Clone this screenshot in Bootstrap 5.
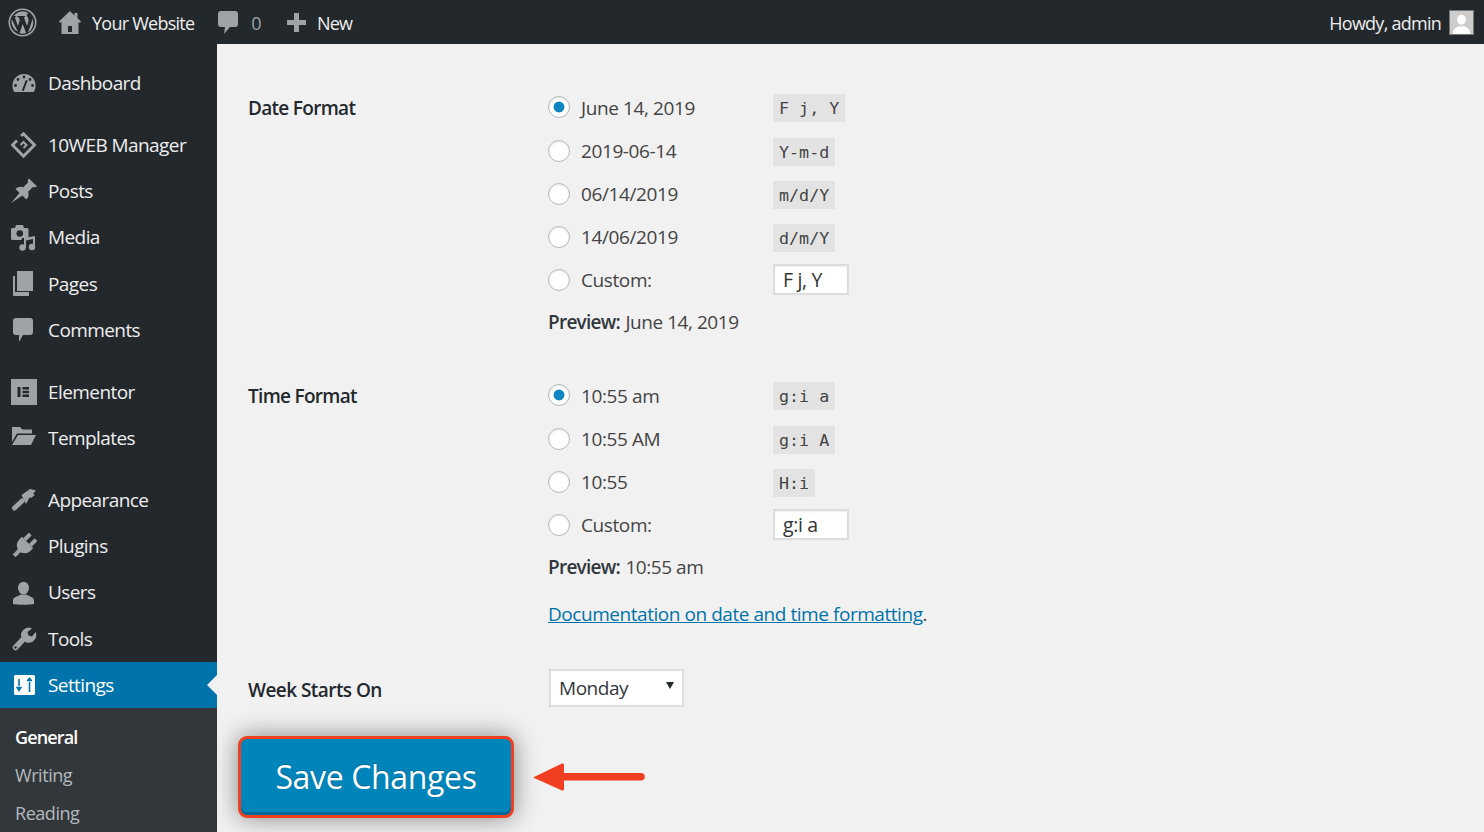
<!DOCTYPE html>
<html lang="en"><head><meta charset="utf-8"><title>General Settings</title>
<link href="https://cdn.jsdelivr.net/npm/bootstrap@5.3.0/dist/css/bootstrap.min.css" rel="stylesheet">
<style>
html,body{height:832px;overflow:hidden}
body{background:#f1f1f1;font-family:"Open Sans","Noto Sans",sans-serif;font-size:19px;color:#444;letter-spacing:-.45px}
.tbar{height:44px;background:#23282d;padding:0;color:#eee;flex-wrap:nowrap;font-size:18px;letter-spacing:-.75px}
.tbar svg{display:block;flex:none}
.tbar span{padding-top:3px}
.tb-logo{margin-left:8px}.tb-home{margin-left:22px}.tb-site{margin-left:11px}.tb-cm{margin-left:24px}.tb-zero{margin-left:13px;color:#9ea3a8}.tb-plus{margin-left:26px}.tb-new{margin-left:11px}
.tb-howdy{margin-left:auto}.tb-avatar{width:25px;height:25px;margin:0 10px 0 8px;border:1px solid #777;background:#ccc}
.shell{height:788px}
.sidemenu{width:217px;flex:none;background:#23282d;padding-top:16px;overflow:hidden}
.sideitem{height:46.3px;color:#eee;padding-left:11px;gap:11px;text-decoration:none;letter-spacing:-.58px}
.sideitem svg{width:26px;height:26px;flex:none;fill:#9ea3a8}
.sideitem.sep{margin-top:15.5px}
.sideitem.active{background:#0073aa;color:#fff;position:relative}
.sideitem.active::after{content:"";position:absolute;right:0;top:13px;border:10.5px solid transparent;border-right-color:#f1f1f1;border-left:0}
.submenu{background:#32373c;padding-top:11px;height:200px}
.submenu a{display:block;height:37.6px;line-height:36px;padding-left:15px;color:#b4b9be;text-decoration:none;font-size:18px}
.submenu a.on{color:#fff;font-weight:600;letter-spacing:-.85px}
.mainarea{flex:1;padding:42.4px 0 0 31px;min-width:0}
.rowlabel{width:300px;flex:none;color:#23282d;font-weight:600;font-size:19px;line-height:43.2px;padding-top:1px;letter-spacing:-.7px}
.optrow{height:43.2px}
.optrow .form-check-input{width:22px;height:22px;margin:0 0 1px;flex:none;border:1.5px solid #b4b9be;background-color:#fff;box-shadow:inset 0 1px 2px rgba(0,0,0,.1)}
.optrow .form-check-input:checked{background-image:none;background:radial-gradient(circle,#0e86c1 0 5px,#fff 5.8px);border-color:#b4b9be}
.optlabel{width:192px;margin-left:11px;flex:none;color:#444;letter-spacing:-.4px}
.fmtcode{font-family:"DejaVu Sans Mono","Liberation Mono",monospace;font-size:16.7px;letter-spacing:0;background:#e3e3e3;color:#444;padding:0 6px;height:28px;line-height:29px;display:block;margin-top:1px}
.fmtinput{width:76px;height:31px;border:2px solid #ddd;border-radius:0;padding:0 8px;font-size:19.5px;color:#333;box-shadow:inset 0 1px 2px rgba(0,0,0,.07);letter-spacing:-.35px;margin-bottom:2px}
.prevline{line-height:29.2px;color:#444;margin-top:6px}
.prevline b{font-weight:600;color:#32373c;letter-spacing:-.75px;margin-right:1px}
.sect2{margin-top:36.8px}
.docline{margin-top:17.8px;line-height:29.2px}
.docline a{color:#0073aa}
.weekrow{margin-top:39.4px;height:38px}
.weekrow .rowlabel{line-height:40px;padding-top:1px;letter-spacing:-.55px}
.weeksel{width:135px;height:38px;border:2px solid #ddd;border-radius:0;padding:1px 0 0 8px;font-size:19px;color:#32373c;letter-spacing:-.45px;position:relative;background:#fff;display:flex;align-items:center;margin-left:1px}
.weeksel::after{content:"";position:absolute;right:8px;top:11px;border:4.5px solid transparent;border-top:7px solid #23282d;border-bottom:0}
.saverow{margin:29px 0 0 -10px}
.savebtn{width:276px;height:82px;background:#0085ba;border:3px solid #f0401f;border-radius:9px;color:#fff;font-size:32px;letter-spacing:-.35px;padding:0;box-shadow:inset 0 -3px 0 #006799,0 0 24px rgba(0,0,0,.45);text-shadow:0 -1px 1px #006799}
.savebtn:hover{background:#0085ba;color:#fff;border-color:#f0401f}
.arrowmark{margin-left:18px;flex:none}
</style></head>
<body>
<nav class="navbar tbar d-flex align-items-center">
<svg class="tb-logo" width="29" height="29" viewBox="0 0 29 29"><circle cx="14.5" cy="14.5" r="13.2" fill="none" stroke="#9ea3a8" stroke-width="1.6"/><path fill="#9ea3a8" d="M14.5 3.4c-3.5 0-6.700 1.700-8.800 4.600.5 0 1.800-.1 1.800-.1.9 0 1 .9.1 1l-.8.1 3.100 9.200 1.900-5.600-1.300-3.600-.9-.1c-.9 0-.8-1.100.1-1 0 0 2.800.2 3.700.2s3.300-.2 3.300-.2c.9-.1 1 1 .1 1l-.9.1 3.100 9.100.9-2.900c.5-1.300.7-2.300.7-3.100 0-1.200-.4-2-.8-2.700-.5-.8-1-1.500-1-2.300 0-.9.7-1.700 1.600-1.700h.1c-1.900-1.400-4.200-2.200-6.100-2.200zM3.800 11.200a11 11 0 0 0 6.100 12.600zM14.700 15.900l-3.200 9.400a11 11 0 0 0 6.700-.2l-.1-.1zM24 10c.1.400.100.800.100 1.300 0 1.100-.2 2.300-.8 3.800l-3.300 9.500A11 11 0 0 0 24 10z"/></svg>
<svg class="tb-home" width="22" height="23" viewBox="0 0 22 23"><path fill="#9ea3a8" fill-rule="evenodd" d="M11 0 0 10.500l1 1.500 1.500-1.300V23h17V10.700L21 12l1-1.500-3.500-3.300V2h-3v2.400zM9 15h4v6H9z"/></svg>
<span class="tb-site">Your Website</span>
<svg class="tb-cm" width="20" height="23" viewBox="0 0 20 23"><path fill="#9ea3a8" d="M3 0h14a3 3 0 0 1 3 3v10a3 3 0 0 1-3 3h-5l-6 7 1-7H3a3 3 0 0 1-3-3V3a3 3 0 0 1 3-3z"/></svg>
<span class="tb-zero">0</span>
<svg class="tb-plus" width="19" height="19" viewBox="0 0 19 19"><path fill="#9ea3a8" d="M7 0h5v7h7v5h-7v7H7v-7H0V7h7z"/></svg>
<span class="tb-new">New</span>
<span class="tb-howdy">Howdy, admin</span>
<svg class="tb-avatar" viewBox="0 0 25 25"><path fill="#fff" d="M12.500 4c3 0 4.800 2.400 4.800 5.400s-1.800 5.400-4.800 5.400-4.800-2.400-4.800-5.400S9.500 4 12.500 4zM3 25c0-5 3-7 6.500-8.500h6C19 18 22 20 22 25z"/></svg>
</nav>
<div class="shell d-flex">
<aside class="sidemenu">
<a class="sideitem d-flex align-items-center"><svg viewBox="0 0 26 26"><path d="M3.500 22C1.800 20 1.500 17.500 1.500 15.500a11.500 11.500 0 0 1 23 0c0 2-.3 4.500-2 6.500z"/><g fill="#23282d"><circle cx="13" cy="7" r="1.400"/><circle cx="7" cy="9.500" r="1.400"/><circle cx="19" cy="9.500" r="1.400"/><circle cx="4.500" cy="15.500" r="1.400"/><circle cx="21.500" cy="15.500" r="1.400"/></g><path stroke="#23282d" stroke-width="2" stroke-linecap="round" d="M12 20 15.500 11"/></svg>Dashboard</a>
<a class="sideitem sep d-flex align-items-center"><svg viewBox="0 0 26 26"><path fill="none" stroke="#9ea3a8" stroke-width="3" d="M10 3.800 12.500 1.800 23.500 13 12.500 24.200 1.500 13 6 8.500"/><path fill="none" stroke="#9ea3a8" stroke-width="2" d="M9.500 13 12.500 10 15.500 13 12.500 16"/></svg>10WEB Manager</a>
<a class="sideitem d-flex align-items-center"><svg viewBox="0 0 26 26"><path d="M0 25l8.500-10-4-4c2.200-2.200 5-2.800 7.800-1.700L17 4.500c-.5-1.700-.3-2.800.9-4l8 7.800c-1.200 1.100-2.300 1.300-4 .8l-4.800 4.700c1.100 2.800.5 5.600-1.700 7.800l-4-4z"/></svg>Posts</a>
<a class="sideitem d-flex align-items-center"><svg viewBox="0 0 26 26"><path d="M5 0h7l1 3h3a1.500 1.500 0 0 1 1.500 1.500V13.500A1.500 1.500 0 0 1 16 15H1.500A1.500 1.500 0 0 1 0 13.500v-9A1.500 1.500 0 0 1 1.500 3H4z"/><circle cx="8.800" cy="8.500" r="3.300" fill="#23282d"/><path fill="#23282d" d="M11 13h14v13H8z"/><circle cx="11.500" cy="22.500" r="3.200"/><circle cx="21" cy="22" r="3.200"/><path d="M13 22.500V13l11-2v11h-2v-8l-7 1.500v7z"/></svg>Media</a>
<a class="sideitem d-flex align-items-center"><svg viewBox="0 0 26 26"><path d="M2 5h2v16h14v4H3a1 1 0 0 1-1-1z"/><path d="M6 0h16v20H6z"/></svg>Pages</a>
<a class="sideitem d-flex align-items-center"><svg viewBox="0 0 26 26"><path d="M5 1h14a3 3 0 0 1 3 3v11a3 3 0 0 1-3 3h-7l-4 7v-7H5a3 3 0 0 1-3-3V4a3 3 0 0 1 3-3z"/></svg>Comments</a>
<a class="sideitem sep d-flex align-items-center"><svg viewBox="0 0 26 26"><path fill-rule="evenodd" d="M0 0h26v26H0zM6.500 8v10h3V8zM11.500 8v2.500H18V8zM11.500 11.800v2.500H18v-2.500zM11.500 15.500V18H18v-2.500z"/></svg>Elementor</a>
<a class="sideitem d-flex align-items-center"><svg viewBox="0 0 26 26"><path d="M1 2h8l2.500 2.500H21v4H6L1 17z"/><path d="M7 10h18l-5 10H1z"/></svg>Templates</a>
<a class="sideitem sep d-flex align-items-center"><svg viewBox="0 0 26 26"><path d="M10.500 8 19 2l6 1.500-3 3.500 2 1-4 3-1.500-.5L15 17z"/><path stroke="#9ea3a8" stroke-width="5" stroke-linecap="round" d="M3.500 21 11 14"/></svg>Appearance</a>
<a class="sideitem d-flex align-items-center"><svg viewBox="0 0 26 26"><g transform="rotate(45 13 13)"><rect x="7" y="0" width="4" height="8" rx="1"/><rect x="15" y="0" width="4" height="8" rx="1"/><path d="M5 8h16v4a8 8 0 0 1-16 0z"/><rect x="11" y="18" width="4" height="9"/></g></svg>Plugins</a>
<a class="sideitem d-flex align-items-center"><svg viewBox="0 0 26 26"><ellipse cx="12.500" cy="8" rx="5.500" ry="6.300"/><path d="M2 24v-3.500c0-3.500 5-4 7.500-6h6c2.500 2 7.500 2.500 7.500 6V24c-3 1-18 1-21 0z"/></svg>Users</a>
<a class="sideitem d-flex align-items-center"><svg viewBox="0 0 26 26"><path stroke="#9ea3a8" stroke-width="5.500" stroke-linecap="round" d="M4.500 21.500 13 12.500"/><path d="M11.500 13.500a7.500 7.500 0 0 1 9.500-11l-4.500 3.500 1 3.500 3.500 1 3.500-4.500a7.500 7.500 0 0 1-10 10z"/><circle cx="4.500" cy="21.500" r="1.200" fill="#23282d"/></svg>Tools</a>
<a class="sideitem active d-flex align-items-center"><svg viewBox="0 0 26 26"><rect x="3" y="3" width="21" height="20" rx="1.500" fill="#fff"/><path stroke="#0073aa" stroke-width="1.600" fill="none" d="M8 7v7M18.500 10v10M5.500 15.500h5M16 8.500h5"/><path fill="#0073aa" d="M5 15h6l-3 5zM18.500 5 21.500 9h-6z"/></svg>Settings</a>
<div class="submenu"><a class="on" href="#">General</a><a href="#">Writing</a><a href="#">Reading</a></div>
</aside>
<main class="mainarea">
<form>
<section class="d-flex">
<div class="rowlabel">Date Format</div>
<div>
<div class="optrow d-flex align-items-center"><input class="form-check-input" type="radio" name="df" checked><span class="optlabel">June 14, 2019</span><code class="fmtcode">F j, Y</code></div>
<div class="optrow d-flex align-items-center"><input class="form-check-input" type="radio" name="df"><span class="optlabel">2019-06-14</span><code class="fmtcode">Y-m-d</code></div>
<div class="optrow d-flex align-items-center"><input class="form-check-input" type="radio" name="df"><span class="optlabel">06/14/2019</span><code class="fmtcode">m/d/Y</code></div>
<div class="optrow d-flex align-items-center"><input class="form-check-input" type="radio" name="df"><span class="optlabel">14/06/2019</span><code class="fmtcode">d/m/Y</code></div>
<div class="optrow d-flex align-items-center"><input class="form-check-input" type="radio" name="df"><span class="optlabel">Custom:</span><input class="form-control fmtinput" value="F j, Y"></div>
<div class="prevline"><b>Preview:</b> June 14, 2019</div>
</div>
</section>
<section class="d-flex sect2">
<div class="rowlabel">Time Format</div>
<div>
<div class="optrow d-flex align-items-center"><input class="form-check-input" type="radio" name="tf" checked><span class="optlabel">10:55 am</span><code class="fmtcode">g:i a</code></div>
<div class="optrow d-flex align-items-center"><input class="form-check-input" type="radio" name="tf"><span class="optlabel">10:55 AM</span><code class="fmtcode">g:i A</code></div>
<div class="optrow d-flex align-items-center"><input class="form-check-input" type="radio" name="tf"><span class="optlabel">10:55</span><code class="fmtcode">H:i</code></div>
<div class="optrow d-flex align-items-center"><input class="form-check-input" type="radio" name="tf"><span class="optlabel">Custom:</span><input class="form-control fmtinput" value="g:i a"></div>
<div class="prevline"><b>Preview:</b> 10:55 am</div>
<div class="docline"><a href="#">Documentation on date and time formatting</a>.</div>
</div>
</section>
<section class="d-flex weekrow">
<div class="rowlabel">Week Starts On</div>
<div class="weeksel">Monday</div>
</section>
<div class="saverow d-flex align-items-center">
<button type="button" class="btn savebtn">Save Changes</button>
<svg class="arrowmark" width="113" height="30" viewBox="0 0 113 30"><path fill="#f23e20" d="M1 15.500 30 1.500c1-.4 2 .2 2 1.300V11h77a3.500 3.500 0 0 1 0 7.500H32v8.700c0 1.100-1 1.700-2 1.300z"/></svg>
</div>
</form>
</main>
</div>
</body></html>
